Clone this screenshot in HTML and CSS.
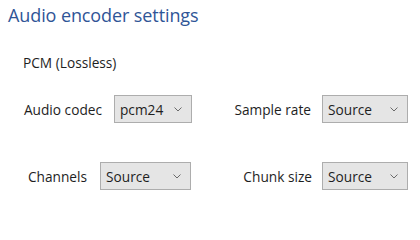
FILE: index.html
```html
<!DOCTYPE html>
<html>
<head>
<meta charset="utf-8">
<link rel="stylesheet" href="styles.css">
</head>
<body>
<div class="panel">
  <h1 class="title">Audio encoder settings</h1>
  <div class="subtitle">PCM (Lossless)</div>
  <div class="row row1">
    <span class="label l-codec">Audio codec</span>
    <div class="select w-codec"><span>pcm24</span><svg class="chev" width="8" height="5" viewBox="0 0 8 5"><path d="M0.5 0.5 L4 4 L7.5 0.5" fill="none" stroke="#6a6a6a" stroke-width="1"/></svg></div>
    <span class="label l-rate">Sample rate</span>
    <div class="select w-right"><span>Source</span><svg class="chev" width="8" height="5" viewBox="0 0 8 5"><path d="M0.5 0.5 L4 4 L7.5 0.5" fill="none" stroke="#6a6a6a" stroke-width="1"/></svg></div>
  </div>
  <div class="row row2">
    <span class="label l-chan">Channels</span>
    <div class="select w-chan"><span>Source</span><svg class="chev" width="8" height="5" viewBox="0 0 8 5"><path d="M0.5 0.5 L4 4 L7.5 0.5" fill="none" stroke="#6a6a6a" stroke-width="1"/></svg></div>
    <span class="label l-chunk">Chunk size</span>
    <div class="select w-right"><span>Source</span><svg class="chev" width="8" height="5" viewBox="0 0 8 5"><path d="M0.5 0.5 L4 4 L7.5 0.5" fill="none" stroke="#6a6a6a" stroke-width="1"/></svg></div>
  </div>
</div>
</body>
</html>
```
FILE: styles.css
```css
html, body {
  margin: 0;
  padding: 0;
  background: #ffffff;
}
body {
  width: 420px;
  height: 216px;
  overflow: hidden;
  font-family: "Open Sans", "Noto Sans", sans-serif;
  color: #1e1e1e;
}
.panel {
  padding-top: 3px;
}
.title {
  margin: 0 0 0 8px;
  font-size: 18px;
  font-weight: 400;
  color: #2f5597;
  line-height: 24px;
  letter-spacing: -0.1px;
}
.subtitle {
  margin: 27px 0 0 23px;
  font-size: 13.7px;
  line-height: 18px;
}
.row {
  display: flex;
  align-items: center;
  height: 28px;
}
.row1 {
  margin-top: 23px;
}
.row2 {
  margin-top: 39px;
}
.label {
  font-size: 13.7px;
  text-align: right;
  white-space: nowrap;
  flex: none;
}
.l-codec { margin-left: 14px; width: 88px; margin-right: 12px; }
.l-rate { margin-left: 30px; width: 89px; margin-right: 11px; }
.l-chan { margin-left: 14px; width: 73px; margin-right: 13px; }
.l-chunk { margin-left: 31px; width: 90px; margin-right: 10px; }
.select {
  box-sizing: border-box;
  height: 28px;
  flex: none;
  display: flex;
  align-items: center;
  justify-content: space-between;
  background: #e5e5e5;
  border: 1px solid #adadad;
  padding: 0 9px 0 5px;
  font-size: 13.7px;
}
.w-codec { width: 78px; }
.w-chan { width: 91px; }
.w-right { width: 86px; }
.chev { display: block; }
```
